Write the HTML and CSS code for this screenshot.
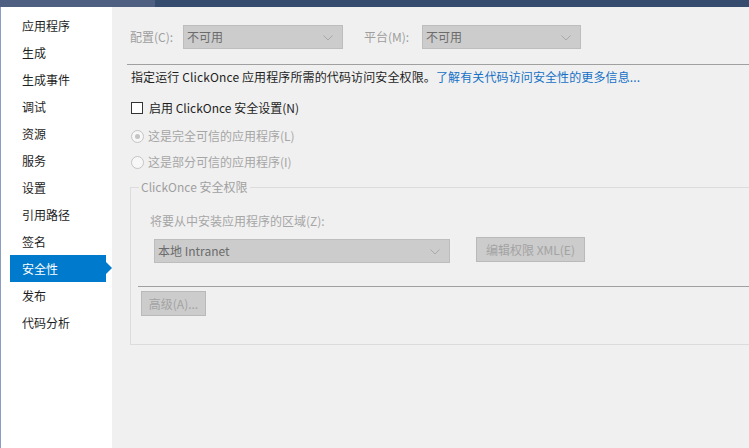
FILE: index.html
```html
<!DOCTYPE html>
<html lang="zh-CN">
<head>
<meta charset="utf-8">
<title>安全性</title>
<link rel="stylesheet" href="styles.css">
</head>
<body>
<div class="titlebar"><div class="tab"></div><div class="rest"></div></div>
<div class="window">
  <nav class="sidebar">
    <div class="item">应用程序</div>
    <div class="item">生成</div>
    <div class="item">生成事件</div>
    <div class="item">调试</div>
    <div class="item">资源</div>
    <div class="item">服务</div>
    <div class="item">设置</div>
    <div class="item">引用路径</div>
    <div class="item">签名</div>
    <div class="item active">安全性</div>
    <div class="item">发布</div>
    <div class="item">代码分析</div>
  </nav>
  <main class="content">
    <div class="config-row">
      <span class="label label-config">配置(C):</span>
      <div class="combo combo-config"><span>不可用</span><svg class="chev" width="10" height="6" viewBox="0 0 10 6"><path d="M0.5 0.5 L5 5 L9.5 0.5" fill="none" stroke="#a9a9a9" stroke-width="1"/></svg></div>
      <span class="label label-platform">平台(M):</span>
      <div class="combo combo-platform"><span>不可用</span><svg class="chev" width="10" height="6" viewBox="0 0 10 6"><path d="M0.5 0.5 L5 5 L9.5 0.5" fill="none" stroke="#a9a9a9" stroke-width="1"/></svg></div>
    </div>
    <div class="sep"></div>
    <p class="desc">指定运行 ClickOnce 应用程序所需的代码访问安全权限。<a class="link" href="#">了解有关代码访问安全性的更多信息...</a></p>
    <div class="check-row"><span class="box"></span><span>启用 ClickOnce 安全设置(N)</span></div>
    <div class="radio-row r1"><span class="circle checked"></span><span>这是完全可信的应用程序(L)</span></div>
    <div class="radio-row r2"><span class="circle"></span><span>这是部分可信的应用程序(I)</span></div>
    <fieldset class="group">
      <legend>ClickOnce 安全权限</legend>
      <div class="zone-label">将要从中安装应用程序的区域(Z):</div>
      <div class="zone-row">
        <div class="combo combo-zone"><span>本地 Intranet</span><svg class="chev" width="10" height="6" viewBox="0 0 10 6"><path d="M0.5 0.5 L5 5 L9.5 0.5" fill="none" stroke="#a9a9a9" stroke-width="1"/></svg></div>
        <div class="btn btn-xml">编辑权限 XML(E)</div>
      </div>
      <div class="sep2"></div>
      <div class="btn btn-adv">高级(A)...</div>
    </fieldset>
  </main>
</div>
</body>
</html>
```
FILE: styles.css
```css
* { box-sizing: border-box; }
html, body {
  margin: 0;
  padding: 0;
  width: 749px;
  height: 448px;
  overflow: hidden;
  background: #f0f0f0;
  font-family: "Noto Sans CJK SC", "Noto Sans", sans-serif;
  font-size: 12px;
  color: #1e1e1e;
}
.titlebar {
  display: flex;
  height: 7px;
}
.titlebar .tab { width: 155px; background: #4f5f81; }
.titlebar .rest { flex: 1; background: #354c6f; }

.window {
  display: flex;
  height: 441px;
}
.sidebar {
  width: 112px;
  flex: none;
  background: #ffffff;
  border-left: 1px solid #8c9cc5;
  padding-top: 5px;
}
.item {
  position: relative;
  margin-left: 9px;
  width: 96px;
  height: 27px;
  line-height: 27px;
  padding-left: 12px;
  color: #1e1e1e;
}
.item.active {
  background: #007acc;
  color: #ffffff;
}
.item.active::after {
  content: "";
  position: absolute;
  right: -6px;
  top: 7px;
  border-left: 6px solid #007acc;
  border-top: 6px solid transparent;
  border-bottom: 6px solid transparent;
}

.content {
  flex: 1;
  padding-left: 18px;
  padding-top: 18px;
  min-width: 0;
  overflow: hidden;
}
.config-row {
  display: flex;
  align-items: center;
  height: 24px;
}
.label {
  color: #9e9e9e;
  line-height: 24px;
}
.label-config { width: 53px; }
.label-platform { width: 58px; margin-left: 21px; }
.combo {
  position: relative;
  height: 24px;
  background: #cccccc;
  border: 1px solid #bdbdbd;
  color: #6b6b6b;
  line-height: 22px;
  padding-left: 3px;
}
.combo .chev {
  position: absolute;
  right: 9px;
  top: 9px;
}
.combo-config { width: 160px; }
.combo-platform { width: 159px; }

.sep {
  margin-top: 15px;
  margin-left: -3px;
  height: 1px;
  background: #a0a0a0;
}
.desc {
  margin: 3px 0 0 1px;
  height: 18px;
  line-height: 18px;
  white-space: nowrap;
  letter-spacing: 0.12px;
}
.link {
  color: #1570c6;
  text-decoration: none;
}
.check-row, .radio-row {
  display: flex;
  align-items: center;
  height: 18px;
  line-height: 18px;
  margin-left: 1px;
  white-space: nowrap;
}
.check-row { margin-top: 13px; }
.box {
  width: 12px;
  height: 12px;
  border: 1px solid #333333;
  background: #ffffff;
  margin-right: 6px;
}
.radio-row { color: #a6a6a6; }
.radio-row.r1 { margin-top: 10px; }
.radio-row.r2 { margin-top: 8px; }
.circle {
  position: relative;
  width: 13px;
  height: 13px;
  border-radius: 50%;
  border: 1px solid #c4c4c4;
  background: #f7f7f7;
  margin-right: 4px;
}
.circle.checked::after {
  content: "";
  position: absolute;
  left: 3px;
  top: 3px;
  width: 5px;
  height: 5px;
  border-radius: 50%;
  background: #c4c4c4;
}

.group {
  margin: 7px 0 0 0;
  padding: 0 0 28px 0;
  border: 1px solid #dcdcdc;
  border-right: none;
  min-width: 0;
}
.group legend {
  margin-left: 8px;
  padding: 0 2px;
  line-height: 18px;
  color: #a0a0a0;
}
.zone-label {
  margin: 16px 0 0 19px;
  line-height: 18px;
  height: 18px;
  color: #a6a6a6;
}
.zone-row {
  display: flex;
  align-items: flex-start;
  margin-top: 7px;
}
.combo-zone {
  width: 296px;
  margin-left: 23px;
  margin-top: 2px;
  padding-left: 3px;
}
.btn {
  height: 25px;
  line-height: 23px;
  background: #cccccc;
  border: 1px solid #b9b9b9;
  color: #a3a3a3;
  text-align: center;
}
.btn-xml {
  width: 109px;
  margin-left: 26px;
}
.sep2 {
  margin-top: 23px;
  margin-left: 7px;
  height: 1px;
  background: #a0a0a0;
}
.btn-adv {
  width: 65px;
  margin-top: 4px;
  margin-left: 10px;
}
```
